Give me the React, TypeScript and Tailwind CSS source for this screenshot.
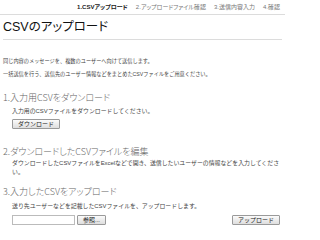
const font = { fontFamily: '"Liberation Sans", "Noto Sans CJK JP", sans-serif' };
const headFont = { fontFamily: '"Noto Sans CJK JP", sans-serif' };

const steps = [
  { label: '1.CSVアップロード', active: true },
  { label: '2.アップロードファイル確認', active: false },
  { label: '3.送信内容入力', active: false },
  { label: '4.確認', active: false },
];

function SmallButton({ children }: { children: React.ReactNode }) {
  return (
    <button className="h-[10px] px-[5px] border border-[#9a9a9a] bg-gradient-to-b from-[#fbfbfb] to-[#dedede] text-[6px] leading-none text-[#222] rounded-[1px]">
      {children}
    </button>
  );
}

function Heading({ children }: { children: React.ReactNode }) {
  return (
    <h2
      className="text-[9px] leading-[10px] text-[#666] font-light [font-feature-settings:'palt']"
      style={headFont}
    >
      {children}
    </h2>
  );
}

export default function App() {
  return (
    <div className="w-[285px] h-[230px] bg-white text-[#333] overflow-hidden leading-none" style={font}>
      <div className="flex justify-end gap-[8px] pr-[5px] pt-[4px] h-[15px] border-b border-[#dcdcdc] text-[6px] leading-[7px] [font-feature-settings:'palt']">
        {steps.map((s) => (
          <span key={s.label} className={s.active ? 'font-bold text-[#222]' : 'text-[#777]'}>
            {s.label}
          </span>
        ))}
      </div>

      <h1 className="mx-[3px] pt-[5px] h-[25px] border-b border-[#dcdcdc] text-[12.5px] leading-[14px] text-[#111] [font-feature-settings:'palt']">
        CSVのアップロード
      </h1>

      <div className="px-[3px] pt-[18px] text-[5.2px] leading-[6px] text-[#444] space-y-[7px]">
        <p>同じ内容のメッセージを、複数のユーザーへ向けて送信します。</p>
        <p>一括送信を行う、送信先のユーザー情報などをまとめたCSVファイルをご用意ください。</p>
      </div>

      <section className="mt-[16px] px-[3px]">
        <Heading>1.入力用CSVをダウンロード</Heading>
        <p className="pl-[9px] mt-[5px] text-[5.9px] leading-[7px] text-[#444]">入力用のCSVファイルをダウンロードしてください。</p>
        <div className="pl-[9px] mt-[4px] flex">
          <SmallButton>ダウンロード</SmallButton>
        </div>
      </section>

      <section className="mt-[18px] pl-[3px]">
        <Heading>2.ダウンロードしたCSVファイルを編集</Heading>
        <p className="pl-[9px] mt-[2px] text-[5.9px] leading-[9px] text-[#444]">
          ダウンロードしたCSVファイルをExcelなどで開き、送信したいユーザーの情報などを入力してくださ
          <br />
          い。
        </p>
      </section>

      <section className="mt-[10px] px-[3px]">
        <Heading>3.入力したCSVをアップロード</Heading>
        <p className="pl-[9px] mt-[6px] text-[5.9px] leading-[7px] text-[#444]">送り先ユーザーなどを記載したCSVファイルを、アップロードします。</p>
        <div className="pl-[9px] mt-[5px] pr-[2px] flex items-center">
          <div className="w-[63px] h-[10px] border border-[#bbb] bg-white" />
          <div className="ml-[2px] flex">
            <SmallButton>参照...</SmallButton>
          </div>
          <div className="ml-auto flex">
            <SmallButton>アップロード</SmallButton>
          </div>
        </div>
      </section>
    </div>
  );
}
